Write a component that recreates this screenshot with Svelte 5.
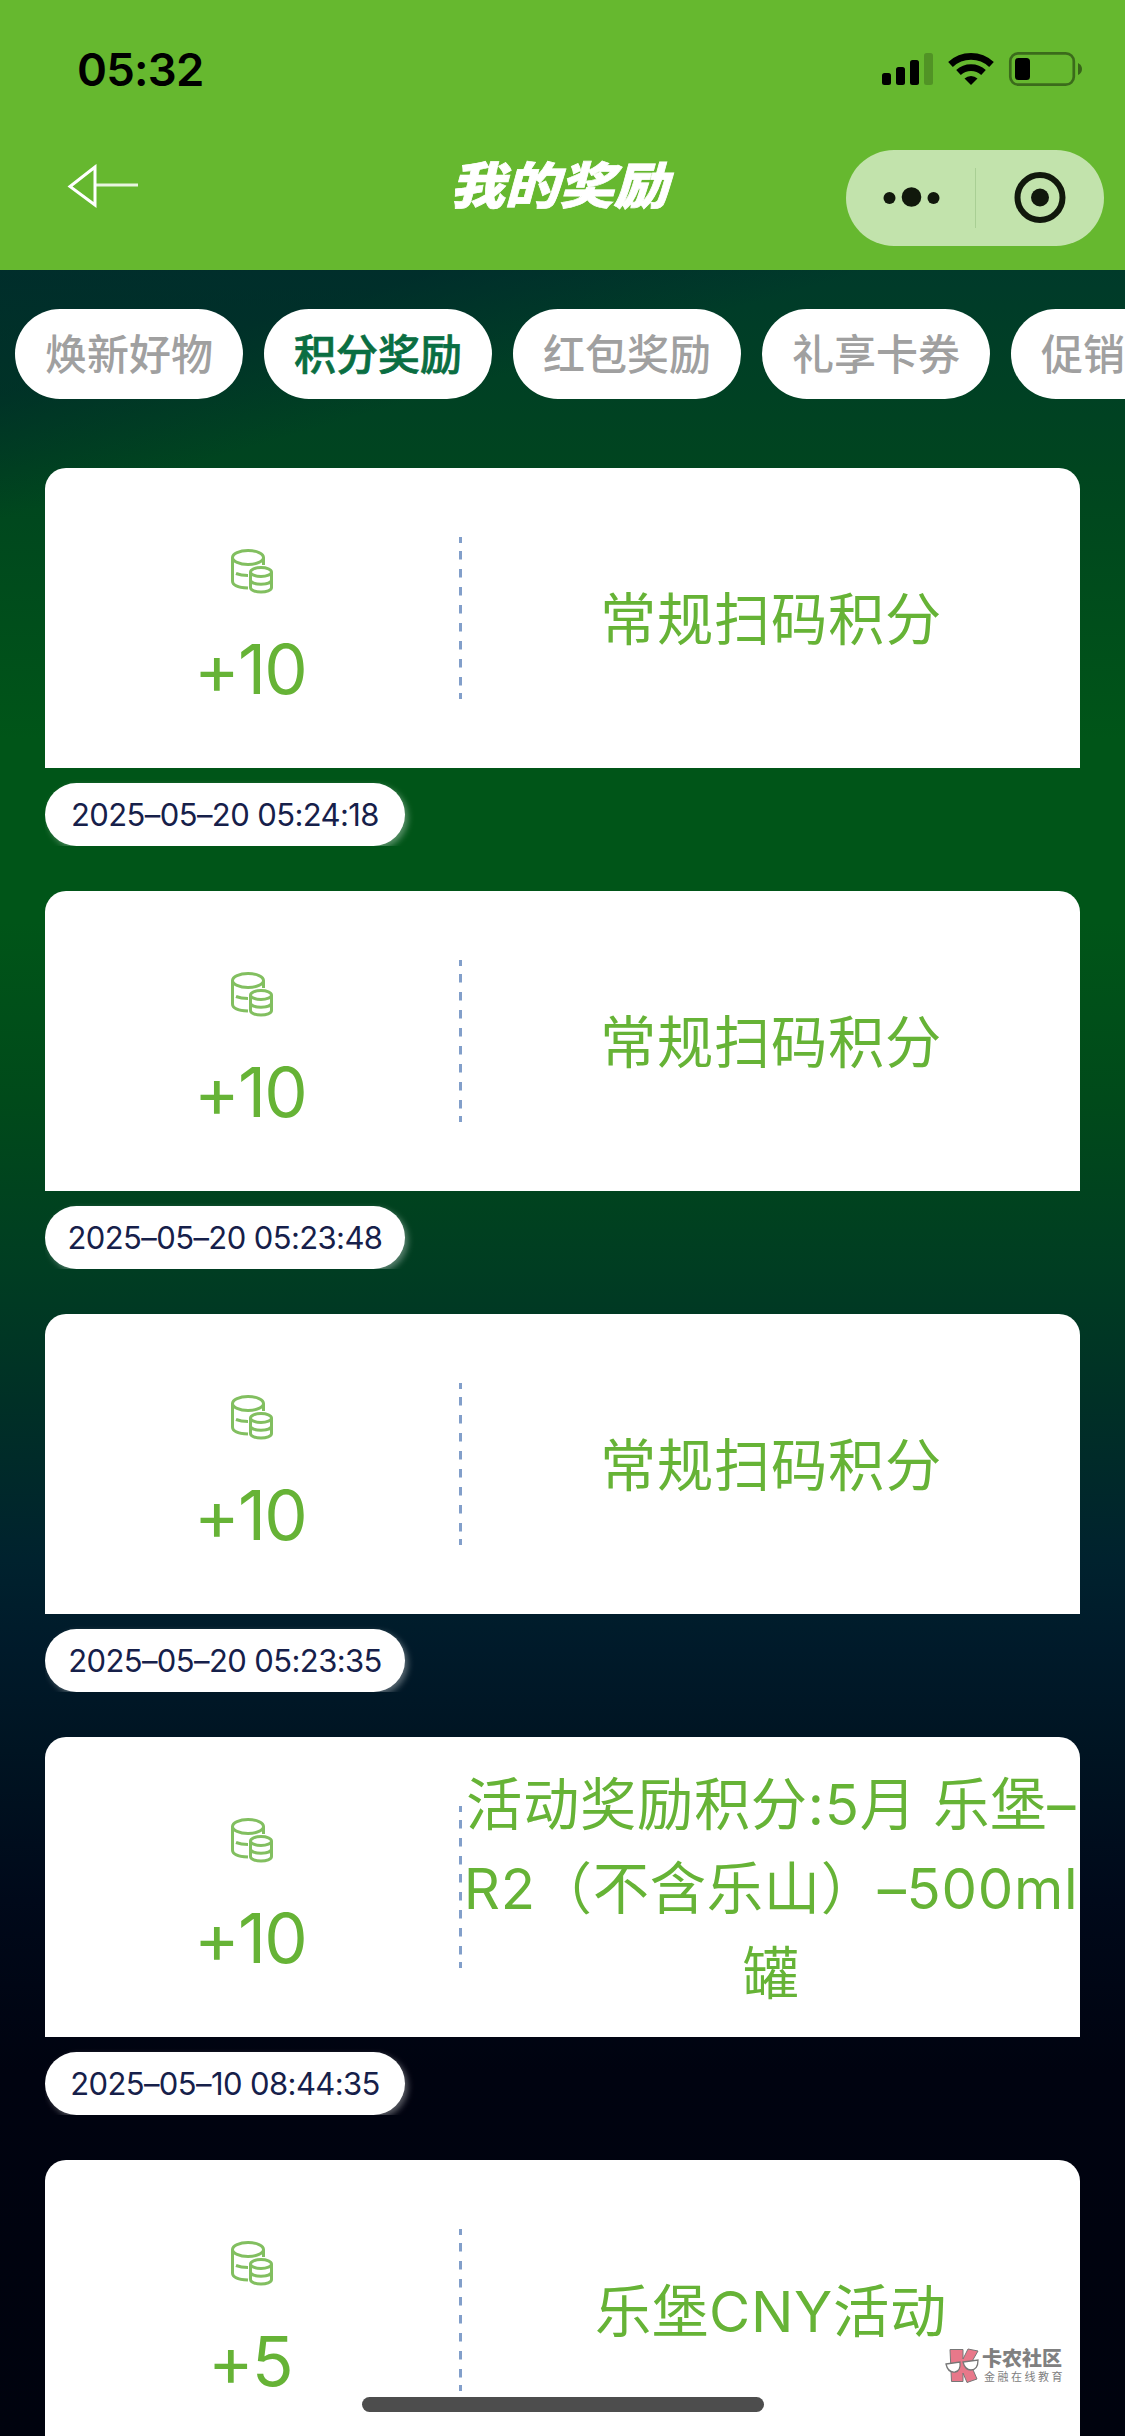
<script>
  let tabs = ['焕新好物', '积分奖励', '红包奖励', '礼享卡券', '促销活动'];
  let activeTab = 1;

  let rewards = [
    { points: 10, title: ['常规扫码积分'], time: '2025–05–20 05:24:18' },
    { points: 10, title: ['常规扫码积分'], time: '2025–05–20 05:23:48' },
    { points: 10, title: ['常规扫码积分'], time: '2025–05–20 05:23:35' },
    { points: 10, title: ['活动奖励积分:5月 乐堡–', 'R2（不含乐山）–500ml', '罐'], time: '2025–05–10 08:44:35' },
    { points: 5, title: ['乐堡CNY活动'] },
  ];
</script>

<div class="screen">
  <header>
    <div class="status">
      <span class="clock">05:32</span>
      <svg class="signals" width="202" height="36" viewBox="881 51 202 36">
        <rect x="882" y="73" width="9" height="12" rx="2.5" />
        <rect x="896" y="67" width="9" height="18" rx="2.5" />
        <rect x="910" y="60" width="9" height="25" rx="2.5" />
        <rect x="924" y="53" width="9" height="32" rx="2.5" opacity=".2" />
        <g fill="none" stroke="#000" stroke-width="6.8">
          <path d="M950.5 64.5a30 30 0 0 1 41 0" />
          <path d="M958.5 72.5a18.5 18.5 0 0 1 25 0" />
        </g>
        <path d="M971 85l-6.5-6.5a9.5 9.5 0 0 1 13 0z" />
        <rect x="1010.3" y="53.3" width="63.5" height="31.4" rx="8" fill="none" stroke="#000" stroke-width="2.7" opacity=".42" />
        <path d="M1078 63q4 2 4 6t-4 6z" opacity=".45" />
        <rect x="1015" y="58" width="15" height="22" rx="3.5" />
      </svg>
    </div>
    <nav>
      <svg class="back" width="72" height="44" viewBox="0 0 72 44" fill="none" stroke="#fff" stroke-width="3">
        <path d="M28 3L3 22.5L28 41Z" />
        <path d="M28 21H71" stroke-opacity=".85" />
      </svg>
      <h1>我的奖励</h1>
      <div class="capsule">
        <svg width="258" height="96" viewBox="0 0 258 96" fill="#11180c">
          <circle cx="43.5" cy="48" r="6" />
          <circle cx="65.5" cy="47" r="9.8" />
          <circle cx="87.5" cy="48" r="6" />
          <path d="M129.5 18v60" stroke="#a9cf94" />
          <circle cx="194" cy="47.5" r="22.5" fill="none" stroke="#11180c" stroke-width="6" />
          <circle cx="194" cy="47.5" r="9" />
        </svg>
      </div>
    </nav>
  </header>

  <div class="tabs">
    {#each tabs as tab, i}
      <button class="tab" class:active={i === activeTab} on:click={() => (activeTab = i)}>{tab}</button>
    {/each}
  </div>

  <ul class="list">
    {#each rewards as reward}
      <li>
        <div class="card">
          <div class="points">
            <svg width="42" height="45" viewBox="0 0 42 45" fill="none" stroke="#82bf60" stroke-width="3">
              <ellipse cx="17" cy="8.5" rx="15.5" ry="7" />
              <path d="M1.5 8.5V32c0 4 6 6.500 15.5 7M32.5 8.5V16M5 24.5q5 2 12 2" />
              <ellipse cx="30" cy="23" rx="10.5" ry="4.5" />
              <path d="M19.5 23v15.5c0 6 21 6 21 0V23M19.5 31c0 5.5 21 5.5 21 0" />
            </svg>
            <span>+{reward.points}</span>
          </div>
          <svg class="divider" width="3" height="162" viewBox="0 0 3 162" fill="#829fca">
            <path d="M0 0h3v6h-3zM0 156h3v6h-3z" />
            {#each Array(8) as _, n}
              <rect y={14 + n * 18} width="3" height="8.5" />
            {/each}
          </svg>
          <div class="title">
            {#each reward.title as line}
              <span>{line}</span>
            {/each}
          </div>
        </div>
        {#if reward.time}
          <div class="time">{reward.time}</div>
        {/if}
      </li>
    {/each}
  </ul>

  <div class="watermark">
    <svg width="35" height="36" viewBox="0 0 35 36">
      <path d="M5 1.5H18V11L23 1L33 3L25.5 16L32 31L22 34.5L18 25V33.5H6.5Z" fill="#e8788a" stroke="#777" />
      <path d="M1 16l14-2q1 9-5 10-7 1-9-8zM18 14l15-2q0 10-7 10-6 0-8-8z" fill="#fff" stroke="#777" stroke-width="1.3" />
    </svg>
    <div>
      <b>卡农社区</b>
      <small>金融在线教育</small>
    </div>
  </div>
  <div class="home-bar"></div>
</div>

<style>
  :global(body) {
    margin: 0;
  }

  .screen {
    position: relative;
    width: 1125px;
    height: 2436px;
    overflow: hidden;
    font-family: Inter, 'Noto Sans CJK SC', sans-serif;
    background:
      linear-gradient(164deg, rgba(0, 30, 44, 0.5) 0, rgba(0, 30, 44, 0.42) 380px, transparent 500px),
      linear-gradient(180deg, #003a2a 270px, #00451f 470px, #005518 740px, #005518 920px, #004a1a 1100px, #003d22 1270px, #003026 1400px, #00222e 1560px, #001a2a 1650px, #001422 1750px, #00091a 1900px, #000310 2070px, #00030e 2436px);
  }

  header {
    height: 270px;
    background: #66b82f;
  }

  .status {
    display: flex;
    justify-content: space-between;
    align-items: center;
    height: 138px;
    padding: 0 42px 0 77px;
    box-sizing: border-box;
  }

  .clock {
    font-size: 45.5px;
    font-weight: 600;
    letter-spacing: -0.8px;
  }

  nav {
    display: grid;
    grid-template-columns: 385px 1fr 385px;
    align-items: center;
    height: 96px;
    margin-top: 12px;
  }

  .back {
    margin: -25px 0 0 67px;
  }

  h1 {
    margin: -24px 0 0 -7px;
    color: #fff;
    font-size: 54.5px;
    font-weight: 900;
    font-style: italic;
    line-height: 70px;
    text-align: center;
    -webkit-text-stroke: 0.8px #fff;
    transform: scaleY(0.92);
  }

  .capsule {
    justify-self: end;
    width: 258px;
    height: 96px;
    margin-right: 21px;
    border-radius: 48px;
    background: #c2e3ac;
  }

  .tabs {
    display: flex;
    gap: 21px;
    padding: 39px 0 0 15px;
  }

  .tab {
    flex: none;
    width: 228px;
    height: 90px;
    padding: 0 0 5px;
    border: 0;
    border-radius: 45px;
    background: #fff;
    color: #a0a0a0;
    font: 500 42px 'Noto Sans CJK SC', sans-serif;
  }

  .tab.active {
    color: #0a6e42;
    -webkit-text-stroke: 0.7px #0a6e42;
  }

  .list {
    display: grid;
    gap: 45px;
    margin: 69px 45px 0;
    padding: 0;
    list-style: none;
  }

  .card {
    display: flex;
    align-items: center;
    height: 300px;
    border-radius: 21px 21px 0 0;
    background: #fff;
    color: #66b336;
  }

  .points {
    display: flex;
    flex-direction: column;
    align-items: center;
    width: 414px;
    gap: 33px;
    padding-top: 24px;
    font-size: 69px;
    line-height: 84px;
  }

  .points span {
    margin-left: -4px;
    letter-spacing: -1.8px;
  }

  .title {
    display: flex;
    flex: 1;
    flex-direction: column;
    align-items: center;
    padding-top: 5px;
    font-size: 56.3px;
    line-height: 84.4px;
    letter-spacing: 0.7px;
    white-space: pre;
  }

  .time {
    width: 360px;
    height: 63px;
    margin-top: 15px;
    border-radius: 32px;
    background: #fff;
    box-shadow: 3px 3px 6px rgba(255, 255, 255, 0.35);
    clip-path: inset(-6px -12px 0 0);
    color: #16204a;
    font-size: 31px;
    line-height: 63px;
    letter-spacing: -0.6px;
    text-align: center;
  }

  .watermark {
    position: absolute;
    left: 945px;
    top: 2348px;
    display: flex;
    gap: 2px;
    color: #808080;
  }

  .watermark b,
  .watermark small {
    display: block;
    white-space: nowrap;
  }

  .watermark b {
    font-size: 20px;
    font-weight: 900;
    line-height: 23px;
  }

  .watermark small {
    padding-left: 2px;
    font-size: 11px;
    line-height: 13px;
    letter-spacing: 2.5px;
  }

  .home-bar {
    position: absolute;
    left: 362px;
    top: 2397px;
    width: 402px;
    height: 15px;
    border-radius: 8px;
    background: #4d4d4d;
  }
</style>
